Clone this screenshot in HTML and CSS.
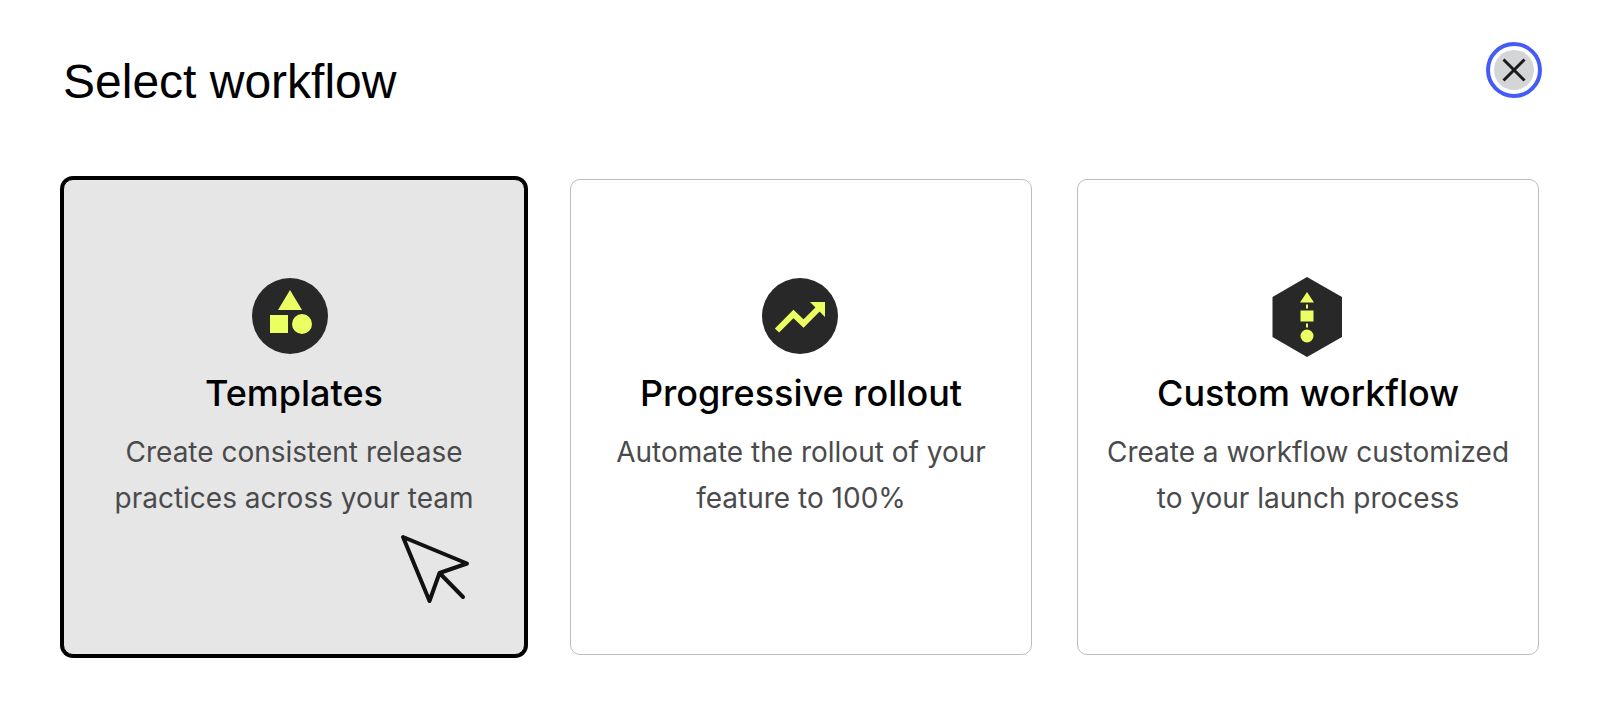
FILE: index.html
```html
<!DOCTYPE html>
<html lang="en">
<head>
<meta charset="utf-8">
<meta name="viewport" content="width=device-width, initial-scale=1">
<title>Select workflow</title>
<link rel="stylesheet" href="styles.css">
</head>
<body>
<main class="dialog">
  <header class="dialog-header">
    <h1 class="dialog-title">Select workflow</h1>
    <button class="close" type="button" aria-label="Close">
      <svg class="close-icon" viewBox="0 0 40 40" aria-hidden="true"><path d="M9.500 9.500 30.500 30.500M30.500 9.500 9.500 30.500"/></svg>
    </button>
  </header>
  <div class="cards">
    <button class="card card-selected" type="button">
      <svg class="card-icon" viewBox="14 12 80 80" aria-hidden="true">
        <circle class="ink" cx="50" cy="51" r="38"/>
        <path class="lime" d="M50 25 62 45H38zM30 50h18v18H30z"/>
        <circle class="lime" cx="62" cy="59" r="10"/>
      </svg>
      <span class="card-title">Templates</span>
      <span class="card-text">Create consistent release practices across your team</span>
      <svg class="cursor" viewBox="8 12 74 74" aria-hidden="true"><path d="M13 17 77 43.500 49.500 53 39.500 81zM49.500 53 73 77"/></svg>
    </button>
    <button class="card" type="button">
      <svg class="card-icon" viewBox="11 12 80 80" aria-hidden="true">
        <circle class="ink" cx="50" cy="51" r="38"/>
        <path class="trend" d="M27 65.500 43.500 49 53.500 58.500 71 41"/>
        <path class="lime" d="M60 37h15v15z"/>
      </svg>
      <span class="card-title">Progressive rollout</span>
      <span class="card-text">Automate the rollout of your feature to 100%</span>
    </button>
    <button class="card" type="button">
      <svg class="card-icon" viewBox="12 12 80 80" aria-hidden="true">
        <path class="ink" d="M51 12 86 32V72L51 92 16.500 72V32z"/>
        <path class="link" d="M51 39.500v4M51 58.500v4"/>
        <path class="lime" d="M51 27 58 37.500H44zM44.500 45.500h13v11h-13z"/>
        <circle class="lime" cx="51" cy="71" r="6.500"/>
      </svg>
      <span class="card-title">Custom workflow</span>
      <span class="card-text">Create a workflow customized to your launch process</span>
    </button>
  </div>
</main>
</body>
</html>
```
FILE: styles.css
```css
* {
  box-sizing: border-box;
}

body {
  margin: 0;
  background: #fff;
  color: #000;
  font-family: Inter, "Liberation Sans", sans-serif;
}

.dialog {
  padding: 42px 61px 64px 63px;
}

.dialog-header {
  display: flex;
  justify-content: space-between;
  align-items: flex-start;
  margin-right: -3px;
}

.dialog-title {
  margin: 0;
  padding: 8px 0 0;
  font-family: "Liberation Sans", Arial, sans-serif;
  font-size: 48px;
  font-weight: 400;
  line-height: 64px;
}

.close {
  width: 56px;
  height: 56px;
  padding: 4px;
  border: 4px solid #455bf7;
  border-radius: 50%;
  background: #fff;
  cursor: pointer;
}

.close-icon {
  display: block;
  width: 40px;
  height: 40px;
  border-radius: 50%;
  background: #d3d5d6;
  fill: none;
  stroke: #1a1a1a;
  stroke-width: 3;
}

.cards {
  display: grid;
  grid-template-columns: repeat(3, 1fr);
  gap: 45px;
  margin-top: 65px;
}

.card {
  position: relative;
  display: flex;
  flex-direction: column;
  align-items: center;
  min-height: 476px;
  padding: 97px 24px;
  border: 1px solid #bdbdbd;
  border-radius: 10px;
  background: #fff;
  color: #000;
  font-family: inherit;
  text-align: center;
  cursor: pointer;
}

.card-selected {
  border-color: #000;
  background: #e6e6e6;
  box-shadow: 0 0 0 3px #000;
}

.card-icon {
  width: 80px;
  height: 80px;
  overflow: visible;
}

.card-title {
  margin-top: 12px;
  font-size: 36px;
  font-weight: 500;
  line-height: 48px;
}

.card-text {
  max-width: 408px;
  margin-top: 12px;
  color: #4a4a4c;
  font-size: 28px;
  line-height: 46px;
}

.cursor {
  position: absolute;
  right: 52px;
  bottom: 48px;
  width: 74px;
  height: 74px;
  fill: none;
  stroke: #111;
  stroke-width: 4;
  stroke-linecap: round;
  stroke-linejoin: round;
}

.ink {
  fill: #282828;
}

.lime {
  fill: #ebff63;
}

.trend {
  fill: none;
  stroke: #ebff63;
  stroke-width: 6;
}

.link {
  stroke: #ebff63;
  stroke-width: 2;
}
```
